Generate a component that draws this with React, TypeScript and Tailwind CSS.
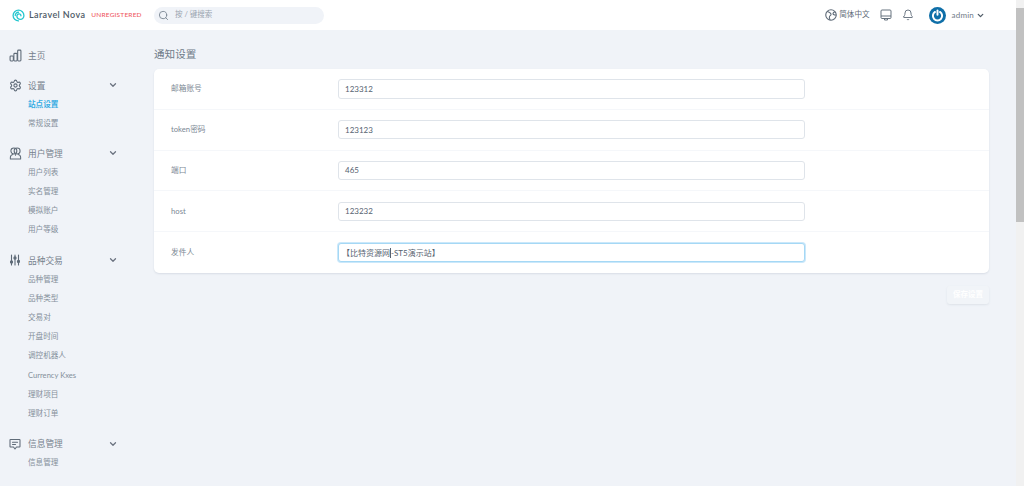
import { Bell, ChevronDown, Search, Settings } from "lucide-react";
import type { ReactNode } from "react";

const FONT = "[font-family:Lato,'Noto_Sans_CJK_SC',sans-serif]";

/* ---------- drawn icons ---------- */

function Logo() {
  return (
    <svg viewBox="0 0 24 24" className="h-[13px] w-[13px]" fill="none" stroke="#25c7cf" strokeWidth="2.400" strokeLinecap="round">
      <path d="M12 22a10 10 0 1 1 10-10c0 4-3 7-6.500 7S9 16.500 9 13.500 11 9 13 9s3.500 1.500 3.500 3.500" />
      <path d="M6 12c0-3.500 2.500-6 6-6" />
    </svg>
  );
}

function BarsIcon() {
  return (
    <svg viewBox="0 0 24 24" className="h-[13px] w-[13px]" fill="none" stroke="#5f6b78" strokeWidth="2">
      <rect x="2" y="13" width="6" height="9" rx="1.500" />
      <rect x="9" y="8" width="6" height="14" rx="1.500" />
      <rect x="16" y="2" width="6" height="20" rx="1.500" />
    </svg>
  );
}

function UsersIcon() {
  return (
    <svg viewBox="0 0 24 24" className="h-[13px] w-[13px]" fill="none" stroke="#5f6b78" strokeWidth="1.900" strokeLinecap="round" strokeLinejoin="round">
      <circle cx="9" cy="7.500" r="5.500" />
      <circle cx="15" cy="7.500" r="5.500" />
      <path d="M2.500 22v-2.500c0-3 2-5 4.500-5.500M21.500 22v-2.500c0-3-2-5-4.500-5.500M2.500 22h19M12 14v1" />
    </svg>
  );
}

function SlidersIcon() {
  return (
    <svg viewBox="0 0 20 24" className="h-[12px] w-[10px]" fill="#5f6b78" stroke="#5f6b78" strokeWidth="2.200" strokeLinecap="round">
      <path d="M3 2v20M10 2v20M17 2v20" />
      <circle cx="3" cy="16" r="2.200" />
      <circle cx="10" cy="8" r="2.200" />
      <circle cx="17" cy="15" r="2.200" />
    </svg>
  );
}

function MessageIcon() {
  return (
    <svg viewBox="0 0 24 24" className="h-[12px] w-[12px]" fill="none" stroke="#5f6b78" strokeWidth="2.100" strokeLinecap="round" strokeLinejoin="round">
      <path d="M3 3h18a1 1 0 0 1 1 1v13a1 1 0 0 1-1 1h-6l-3 4-3-4H3a1 1 0 0 1-1-1V4a1 1 0 0 1 1-1z" />
      <path d="M7 8.500h10M7 13h6" />
    </svg>
  );
}

function GlobeIcon() {
  return (
    <svg viewBox="0 0 24 24" className="h-[12px] w-[12px]" fill="none" stroke="#5f6b78" strokeWidth="2.200" strokeLinecap="round">
      <circle cx="12" cy="12" r="10.500" />
      <path d="M5 5c3 1 6 2 7 5s-2 3-3 5 0 4 1 6.500" />
      <path d="M20 6c-3 0-4 1-4 3s3 3 5.500 3" />
    </svg>
  );
}

function DisplayIcon() {
  return (
    <svg viewBox="0 0 24 24" className="h-[12px] w-[12px]" fill="none" stroke="#5f6b78" strokeWidth="1.900" strokeLinejoin="round">
      <rect x="2" y="2" width="20" height="17" rx="2" />
      <path d="M2 14h20M9 19v3h6v-3" />
    </svg>
  );
}

function PowerAvatar() {
  return (
    <svg viewBox="0 0 24 24" className="h-[17px] w-[17px]">
      <circle cx="12" cy="12" r="12" fill="#0f6fa8" />
      <path d="M8.500 7a6.500 6.500 0 1 0 7 0" fill="none" stroke="#fff" strokeWidth="2.800" strokeLinecap="round" />
      <path d="M12 5v6" stroke="#fff" strokeWidth="2.800" strokeLinecap="round" />
    </svg>
  );
}

/* ---------- sidebar ---------- */

const groups: { icon: ReactNode; title: string; items?: string[] }[] = [
  { icon: <BarsIcon />, title: "主页" },
  { icon: <Settings className="h-[13px] w-[13px] text-[#5f6b78]" strokeWidth={2} />, title: "设置", items: ["站点设置", "常规设置"] },
  { icon: <UsersIcon />, title: "用户管理", items: ["用户列表", "实名管理", "模拟账户", "用户等级"] },
  {
    icon: <SlidersIcon />,
    title: "品种交易",
    items: ["品种管理", "品种类型", "交易对", "开盘时间", "调控机器人", "Currency Kxes", "理财项目", "理财订单"],
  },
  { icon: <MessageIcon />, title: "信息管理", items: ["信息管理"] },
];

function Sidebar() {
  return (
    <aside className="flex w-[154px] shrink-0 flex-col gap-[10.800px] pt-[15.500px]">
      {groups.map((g) => (
        <div key={g.title}>
          <div className="flex h-[19.200px] items-center">
            <span className="flex w-[28px] justify-center pl-[2px]">{g.icon}</span>
            <span className="w-[80px] text-[8.700px] text-[#76818d]">{g.title}</span>
            {g.items && <ChevronDown className="h-[10px] w-[10px] text-[#6b7280]" strokeWidth={3} />}
          </div>
          {g.items?.map((it) => (
            <div
              key={it}
              className={`flex h-[19.200px] items-center pl-[28px] text-[7.600px] ${
                it === "站点设置" ? "font-bold text-[#35ace3]" : "text-[#848f9a]"
              }`}
            >
              {it}
            </div>
          ))}
        </div>
      ))}
    </aside>
  );
}

/* ---------- form ---------- */

const fields = [
  { label: "邮箱账号", value: "123312" },
  { label: "token密码", value: "123123" },
  { label: "端口", value: "465" },
  { label: "host", value: "123232" },
  { label: "发件人", value: "【比特资源网", rest: "-ST5演示站】", focus: true },
];

function Row({ label, value, rest, focus }: { label: string; value: string; rest?: string; focus?: boolean }) {
  return (
    <div className="flex h-[40.800px] items-center border-b border-[#f5f7fa] pl-[17px] last:border-b-0">
      <span className="w-[167px] text-[7.700px] text-[#7c8894]">{label}</span>
      <div
        className={`flex h-[19.500px] w-[467px] items-center rounded-[3px] border bg-white text-[8px] text-[#566270] ${
          focus ? "border-[#a5d8f5] pl-[3px] shadow-[0_0_0_1px_#cbe8fa]" : "border-[#dfe4ea] pl-[6px]"
        }`}
      >
        {value}
        {focus && <span className="h-[10px] w-px bg-[#566270]" />}
        {rest}
      </div>
    </div>
  );
}

export default function App() {
  return (
    <div className={`flex h-[486px] w-[1024px] overflow-hidden bg-[#f0f3f8] ${FONT}`}>
      <div className="flex w-[1016px] flex-col">
        <header className="flex h-[30px] shrink-0 items-center bg-white">
          <div className="flex w-[154px] items-center pl-[12px]">
            <Logo />
            <span className="ml-[4px] text-[9px] font-semibold tracking-[0.4px] text-[#4f5b67]">Laravel Nova</span>
            <span className="ml-[6px] text-[6.500px] font-medium tracking-[0.2px] text-[#ef5a5f]">UNREGISTERED</span>
          </div>
          <div className="flex h-[17px] w-[170px] items-center rounded-full bg-[#f0f3f8] pl-[4px]">
            <Search className="h-[11px] w-[11px] text-[#7c8894]" strokeWidth={2} />
            <span className="ml-[6px] text-[7.500px] text-[#9aa4af]">按 / 键搜索</span>
          </div>
          <div className="ml-auto flex items-center">
            <GlobeIcon />
            <span className="ml-[2.500px] text-[7.600px] text-[#5f6b78]">简体中文</span>
            <span className="ml-[10px]">
              <DisplayIcon />
            </span>
            <Bell className="ml-[10px] h-[12px] w-[12px] text-[#5f6b78]" strokeWidth={1.8} />
            <span className="ml-[15px]">
              <PowerAvatar />
            </span>
            <span className="ml-[6px] text-[8px] tracking-[0.2px] text-[#6f7b88]">admin</span>
            <ChevronDown className="ml-[2px] mr-[31px] h-[9px] w-[9px] text-[#4f5b67]" strokeWidth={3.5} />
          </div>
        </header>

        <div className="flex min-h-0 flex-1">
          <Sidebar />
          <main className="w-[835px]">
            <h1 className="mt-[17px] h-[22px] text-[10.600px] leading-[14px] text-[#6f7b88]">通知设置</h1>
            <section className="rounded-[5px] bg-white shadow-[0_1px_2px_rgba(120,135,155,0.2)]">
              {fields.map((f) => (
                <Row key={f.label} {...f} />
              ))}
            </section>
            <div className="mt-[13px] flex justify-end">
              <button className="h-[18px] w-[42px] rounded-[3px] bg-[#f1f4f8] text-[7.500px] font-bold text-white shadow-[0_1px_2px_rgba(120,135,155,0.15)]">
                保存设置
              </button>
            </div>
          </main>
        </div>
      </div>

      <div className="flex w-[8px] flex-col bg-[#f1f1f1]">
        <div className="mt-[8px] h-[214px] bg-[#c1c1c1]" />
      </div>
    </div>
  );
}
